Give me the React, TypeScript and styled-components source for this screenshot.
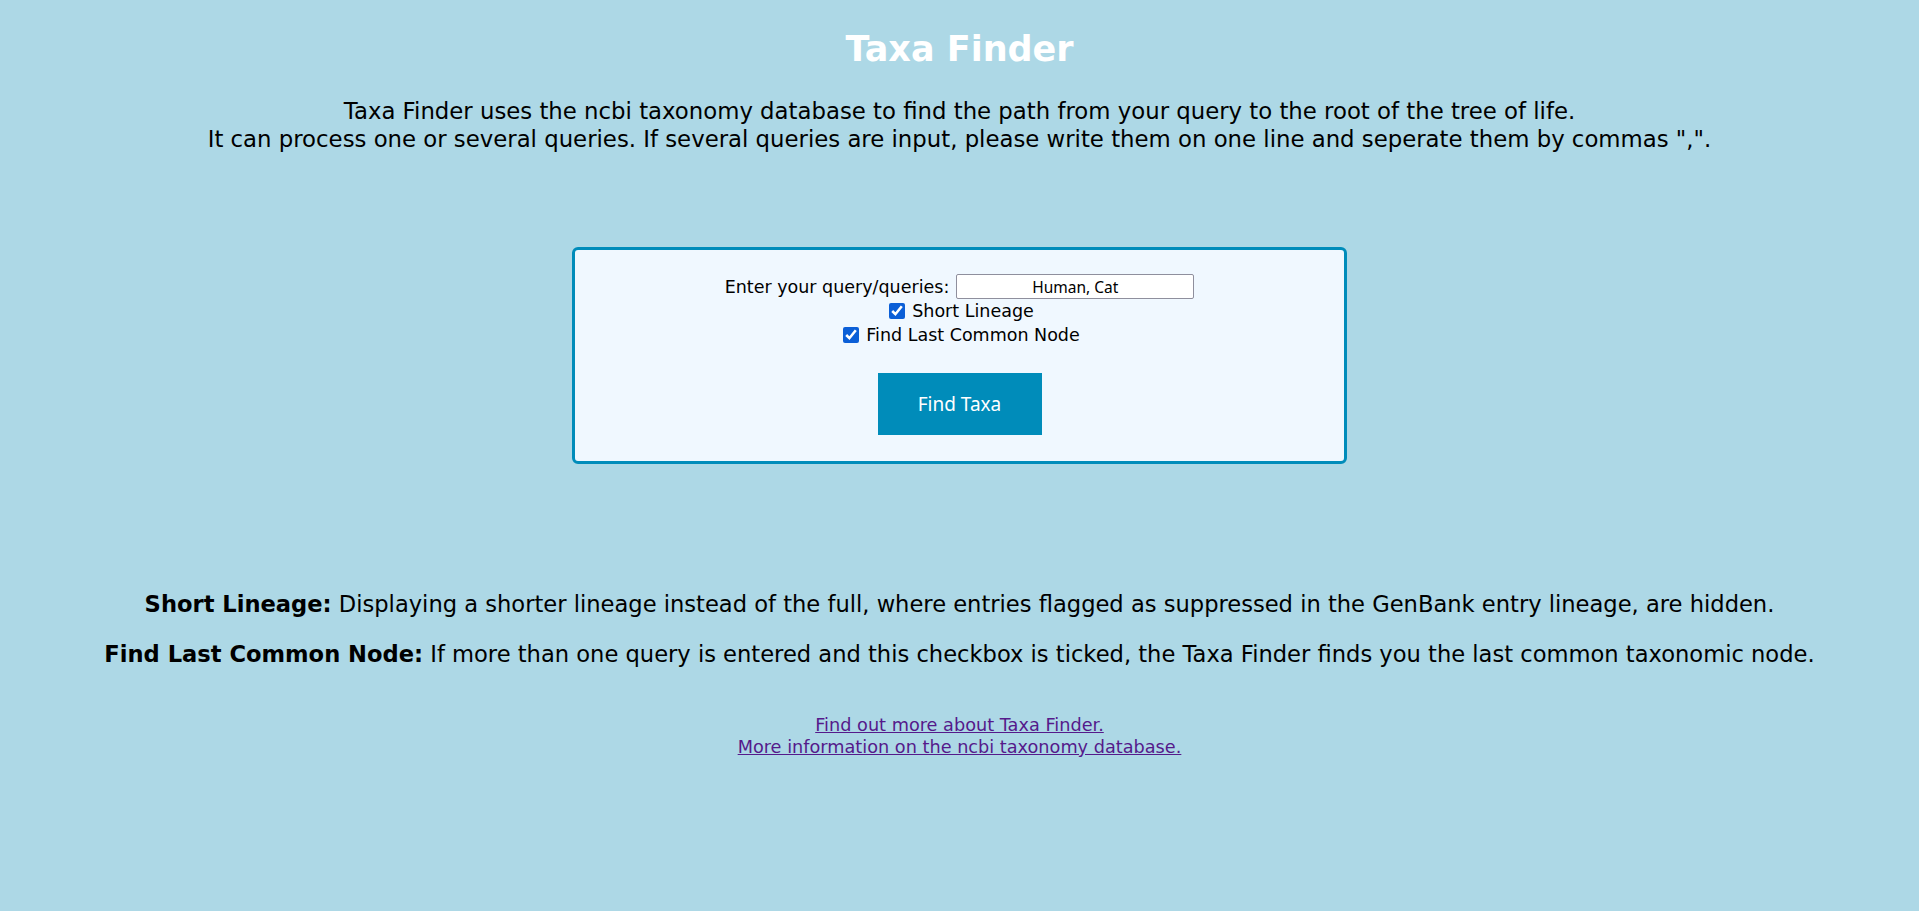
import React from "react";
import styled, { createGlobalStyle } from "styled-components";

const Global = createGlobalStyle`
  html, body {
    margin: 0;
    padding: 0;
    background: #add8e6;
  }
  body {
    font-family: "DejaVu Sans", Verdana, sans-serif;
    color: #000;
  }
`;

const Page = styled.main`
  display: flex;
  flex-direction: column;
  align-items: center;
  padding-top: 29px;
  min-height: 911px;
  box-sizing: border-box;
`;

const Title = styled.h1`
  margin: 0;
  font-size: 35px;
  line-height: 40px;
  font-weight: bold;
  color: #ffffff;
  text-align: center;
`;

const Intro = styled.p`
  margin: 28px 0 0;
  font-size: 22.8px;
  line-height: 28px;
  text-align: center;
`;

const Card = styled.form`
  margin-top: 94px;
  width: 775px;
  box-sizing: border-box;
  border: 3px solid #008cba;
  border-radius: 6px;
  background: #f0f8ff;
  padding: 24px 0 26px;
  display: flex;
  flex-direction: column;
  align-items: center;
`;

const Row = styled.div<{ $gap?: number }>`
  display: flex;
  align-items: baseline;
  justify-content: center;
  font-size: 17.5px;
  line-height: 24px;
  gap: ${(p) => p.$gap ?? 7}px;
`;

const QueryInput = styled.input`
  width: 238px;
  height: 25px;
  box-sizing: border-box;
  border: 1px solid #8f8f9d;
  border-radius: 2px;
  background: #fff;
  text-align: center;
  font-family: "Noto Sans", "Open Sans", sans-serif;
  font-size: 15.5px;
  color: #000;
  padding: 0 4px;
`;

const Check = styled.input`
  width: 16px;
  height: 16px;
  margin: 0 3px 0 4px;
  accent-color: #0b5fd7;
  align-self: center;
`;

const Button = styled.button`
  margin-top: 26px;
  width: 164px;
  height: 62px;
  border: none;
  background: #008cba;
  color: #ffffff;
  font-family: "Noto Sans", "Open Sans", sans-serif;
  font-size: 19px;
  cursor: pointer;
`;

const Notes = styled.section`
  margin-top: 126px;
  display: flex;
  flex-direction: column;
  align-items: center;
  gap: 22px;
`;

const Note = styled.p`
  margin: 0;
  font-size: 22.6px;
  line-height: 28px;
  text-align: center;
`;

const Links = styled.div`
  margin-top: 46px;
  display: flex;
  flex-direction: column;
  align-items: center;
  font-size: 17.7px;
  line-height: 22px;
`;

const Link = styled.a`
  color: #551a8b;
  text-decoration: underline;
`;

export default function App() {
  return (
    <>
      <Global />
      <Page>
        <Title>Taxa Finder</Title>
        <Intro>
          Taxa Finder uses the ncbi taxonomy database to find the path from your query to the root of the tree of life.
          <br />
          It can process one or several queries. If several queries are input, please write them on one line and seperate them by commas ",".
        </Intro>
        <Card onSubmit={(e) => e.preventDefault()}>
          <Row>
            <label htmlFor="q">Enter your query/queries:</label>
            <QueryInput id="q" type="text" defaultValue="Human, Cat" />
          </Row>
          <Row $gap={4}>
            <Check id="sl" type="checkbox" defaultChecked />
            <label htmlFor="sl">Short Lineage</label>
          </Row>
          <Row $gap={4}>
            <Check id="lc" type="checkbox" defaultChecked />
            <label htmlFor="lc">Find Last Common Node</label>
          </Row>
          <Button type="submit">Find Taxa</Button>
        </Card>
        <Notes>
          <Note>
            <b>Short Lineage:</b> Displaying a shorter lineage instead of the full, where entries flagged as suppressed in the GenBank entry lineage, are hidden.
          </Note>
          <Note>
            <b>Find Last Common Node:</b> If more than one query is entered and this checkbox is ticked, the Taxa Finder finds you the last common taxonomic node.
          </Note>
        </Notes>
        <Links>
          <Link href="#about">Find out more about Taxa Finder.</Link>
          <Link href="#ncbi">More information on the ncbi taxonomy database.</Link>
        </Links>
      </Page>
    </>
  );
}
